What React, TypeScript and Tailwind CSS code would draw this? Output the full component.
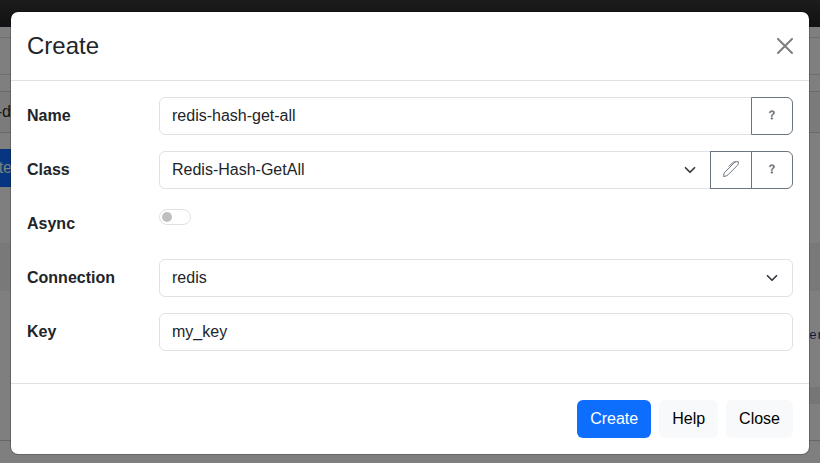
import React from "react";

const control = "h-[38px] border border-[#dee2e6] px-3 text-[16px] leading-[36px] text-[#212529]";

function Chevron() {
  return (
    <svg width="16" height="12" viewBox="0 0 16 16" fill="none" stroke="#343a40" strokeWidth="2.3" strokeLinecap="round" strokeLinejoin="round">
      <path d="m2 5 6 6 6-6" />
    </svg>
  );
}

function Select({ value, className }: { value: string; className: string }) {
  return (
    <div className={`flex flex-1 items-center justify-between ${control} ${className}`}>
      <span>{value}</span>
      <Chevron />
    </div>
  );
}

function QuestionIcon() {
  return (
    <svg className="mb-0.5" width="16" height="16" viewBox="0 0 16 16" fill="#6c757d" stroke="#6c757d" strokeWidth="0.35">
      <path d="M5.255 5.786a.237.237 0 0 0 .241.247h.825c.138 0 .248-.113.266-.25.09-.656.54-1.134 1.342-1.134.686 0 1.314.343 1.314 1.168 0 .635-.374.927-.965 1.371-.673.489-1.206 1.06-1.168 1.987l.003.217a.25.25 0 0 0 .25.246h.811a.25.25 0 0 0 .25-.25v-.105c0-.718.273-.927 1.01-1.486.609-.463 1.244-.977 1.244-2.056 0-1.511-1.276-2.241-2.673-2.241-1.267 0-2.655.59-2.75 2.286zm1.557 5.763c0 .533.425.927 1.01.927.609 0 1.028-.394 1.028-.927 0-.552-.42-.94-1.029-.94-.584 0-1.009.388-1.009.94z" />
    </svg>
  );
}

function PenIcon() {
  return (
    <svg className="mb-0.5" width="16" height="16" viewBox="0 0 16 16" fill="none" stroke="#6c757d" strokeLinecap="round" strokeLinejoin="round">
      <path d="M.8 15.3C.6 13.6.8 12.3 1.8 11.2L11.2 1.8C12.2.8 13.4.6 15.3.7c.2 1.8-.1 2.9-1.1 3.9L5 13.8c-1.1 1.1-2.4 1.6-4.2 1.5z" />
      <path d="M6 5.2 9.2 2c1-1 1.9-1.5 3.2-1.2" />
    </svg>
  );
}

function AddonButton({ last = false, children }: { last?: boolean; children: React.ReactNode }) {
  return (
    <button className={`-ml-px flex h-[38px] w-[42px] items-center justify-center border border-[#6c757d] bg-white ${last ? "rounded-r-md" : ""}`}>
      {children}
    </button>
  );
}

function Row({ label, children }: { label: string; children: React.ReactNode }) {
  return (
    <div className="mb-4 flex h-[38px]">
      <div className="w-[132px] shrink-0 text-[16px] leading-[38px] font-bold">{label}</div>
      <div className="flex flex-1">{children}</div>
    </div>
  );
}

function Backdrop() {
  return (
    <div className="absolute inset-0 flex flex-col bg-[#7f7f7f]">
      <div className="h-[27px] shrink-0 border-b border-[#0b1622] bg-linear-to-b from-[#1c1c1c] to-[#121212]" />
      <div className="h-[11px] shrink-0 border-b border-[#6f6f6f]" />
      <div className="h-[37px] shrink-0 border-b border-[#6f6f6f]" />
      <div className="h-[17px] shrink-0 border-b border-[#6a6a6a]" />
      <div className="h-[41px] shrink-0 border-b border-[#6a6a6a] bg-[#7b7b7b]">
        <div className="flex w-[11px] justify-end text-[16px] leading-[40px] whitespace-nowrap text-[#101214]">-d</div>
      </div>
      <div className="h-[110px] shrink-0 pt-4">
        <div className="flex h-[38px] w-[12px] justify-end bg-[#06367f] text-[16px] leading-[38px] whitespace-nowrap text-[#808080]">te</div>
      </div>
      <div className="h-[48px] shrink-0 bg-[#797979]" />
      <div className="flex h-[96px] shrink-0 justify-end pt-[36px]">
        <div className="w-[11px] font-['Liberation_Mono',monospace] text-[13px] leading-[18px] text-[#0a1c3c]">er</div>
      </div>
      <div className="flex h-[54px] shrink-0 justify-end border-b border-[#666]">
        <div className="h-[17px] w-[11px] bg-[#767676]" />
      </div>
    </div>
  );
}

export default function App() {
  return (
    <div className="relative h-[463px] w-[820px] overflow-hidden font-['Liberation_Sans',Arial,sans-serif] text-[#212529]">
      <Backdrop />
      <div className="absolute top-[11px] left-[10px] w-[800px] rounded-lg border border-black/20 bg-white bg-clip-padding">
        <header className="flex h-[69px] items-center justify-between border-b border-[#dee2e6] px-4">
          <h1 className="text-[24px] leading-9">Create</h1>
          <svg className="opacity-50" width="16" height="16" viewBox="0 0 16 16">
            <path d="M.293.293a1 1 0 0 1 1.414 0L8 6.586 14.293.293a1 1 0 1 1 1.414 1.414L9.414 8l6.293 6.293a1 1 0 0 1-1.414 1.414L8 9.414l-6.293 6.293a1 1 0 0 1-1.414-1.414L6.586 8 .293 1.707a1 1 0 0 1 0-1.414z" />
          </svg>
        </header>
        <main className="p-4">
          <Row label="Name">
            <div className={`flex-1 rounded-l-md ${control}`}>redis-hash-get-all</div>
            <AddonButton last><QuestionIcon /></AddonButton>
          </Row>
          <Row label="Class">
            <Select value="Redis-Hash-GetAll" className="rounded-l-md" />
            <AddonButton><PenIcon /></AddonButton>
            <AddonButton last><QuestionIcon /></AddonButton>
          </Row>
          <Row label="Async">
            <div className="mt-1 flex h-4 w-8 items-center rounded-full border border-[#dee2e6] pl-0.5">
              <div className="size-[10px] rounded-full bg-[#bfbfbf]" />
            </div>
          </Row>
          <Row label="Connection">
            <Select value="redis" className="rounded-md" />
          </Row>
          <Row label="Key">
            <div className={`flex-1 rounded-md ${control}`}>my_key</div>
          </Row>
        </main>
        <footer className="flex h-[71px] items-center justify-end gap-2 border-t border-[#dee2e6] px-4">
          <button className="h-[38px] rounded-md bg-[#0d6efd] px-[13px] text-[16px] text-white">Create</button>
          <button className="h-[38px] rounded-md bg-[#f8f9fa] px-[13px] text-[16px] text-black">Help</button>
          <button className="h-[38px] rounded-md bg-[#f8f9fa] px-[13px] text-[16px] text-black">Close</button>
        </footer>
      </div>
    </div>
  );
}
